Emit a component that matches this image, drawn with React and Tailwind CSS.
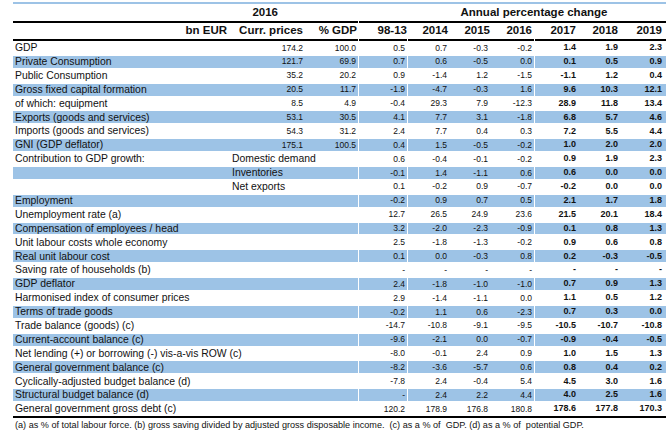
const rows = [
  ["GDP", "", "174.2", "100.0", "0.5", "0.7", "-0.3", "-0.2", "1.4", "1.9", "2.3"],
  ["Private Consumption", "", "121.7", "69.9", "0.7", "0.6", "-0.5", "0.0", "0.1", "0.5", "0.9"],
  ["Public Consumption", "", "35.2", "20.2", "0.9", "-1.4", "1.2", "-1.5", "-1.1", "1.2", "0.4"],
  ["Gross fixed capital formation", "", "20.5", "11.7", "-1.9", "-4.7", "-0.3", "1.6", "9.6", "10.3", "12.1"],
  ["of which: equipment", "", "8.5", "4.9", "-0.4", "29.3", "7.9", "-12.3", "28.9", "11.8", "13.4"],
  ["Exports (goods and services)", "", "53.1", "30.5", "4.1", "7.7", "3.1", "-1.8", "6.8", "5.7", "4.6"],
  ["Imports (goods and services)", "", "54.3", "31.2", "2.4", "7.7", "0.4", "0.3", "7.2", "5.5", "4.4"],
  ["GNI (GDP deflator)", "", "175.1", "100.5", "0.4", "1.5", "-0.5", "-0.2", "1.0", "2.0", "2.0"],
  ["Contribution to GDP growth:", "Domestic demand", "", "", "0.6", "-0.4", "-0.1", "-0.2", "0.9", "1.9", "2.3"],
  ["", "Inventories", "", "", "-0.1", "1.4", "-1.1", "0.6", "0.6", "0.0", "0.0"],
  ["", "Net exports", "", "", "0.1", "-0.2", "0.9", "-0.7", "-0.2", "0.0", "0.0"],
  ["Employment", "", "", "", "-0.2", "0.9", "0.7", "0.5", "2.1", "1.7", "1.8"],
  ["Unemployment rate (a)", "", "", "", "12.7", "26.5", "24.9", "23.6", "21.5", "20.1", "18.4"],
  ["Compensation of employees / head", "", "", "", "3.2", "-2.0", "-2.3", "-0.9", "0.1", "0.8", "1.3"],
  ["Unit labour costs whole economy", "", "", "", "2.5", "-1.8", "-1.3", "-0.2", "0.9", "0.6", "0.8"],
  ["Real unit labour cost", "", "", "", "0.1", "0.0", "-0.3", "0.8", "0.2", "-0.3", "-0.5"],
  ["Saving rate of households (b)", "", "", "", "-", "-", "-", "-", "-", "-", "-"],
  ["GDP deflator", "", "", "", "2.4", "-1.8", "-1.0", "-1.0", "0.7", "0.9", "1.3"],
  ["Harmonised index of consumer prices", "", "", "", "2.9", "-1.4", "-1.1", "0.0", "1.1", "0.5", "1.2"],
  ["Terms of trade goods", "", "", "", "-0.2", "1.1", "0.6", "-2.3", "0.7", "0.3", "0.0"],
  ["Trade balance (goods) (c)", "", "", "", "-14.7", "-10.8", "-9.1", "-9.5", "-10.5", "-10.7", "-10.8"],
  ["Current-account balance (c)", "", "", "", "-9.6", "-2.1", "0.0", "-0.7", "-0.9", "-0.4", "-0.5"],
  ["Net lending (+) or borrowing (-) vis-a-vis ROW (c)", "", "", "", "-8.0", "-0.1", "2.4", "0.9", "1.0", "1.5", "1.3"],
  ["General government balance (c)", "", "", "", "-8.2", "-3.6", "-5.7", "0.6", "0.8", "0.4", "0.2"],
  ["Cyclically-adjusted budget balance (d)", "", "", "", "-7.8", "2.4", "-0.4", "5.4", "4.5", "3.0", "1.6"],
  ["Structural budget balance (d)", "", "", "", "-", "2.4", "2.2", "4.4", "4.0", "2.5", "1.6"],
  ["General government gross debt (c)", "", "", "", "120.2", "178.9", "176.8", "180.8", "178.6", "177.8", "170.3"],
]

const Row = ({ r, blue }) => {
  const bg = blue ? "bg-[#9dc3e6]" : ""
  const num = "h-full flex items-center justify-end text-[8.5px]"
  const bold = "h-full flex items-center justify-end text-[9px] font-bold"
  return (
    <div className="flex h-[13.9px] py-[1px]">
      <div className={`w-[217px] h-full flex items-center pl-[2px] text-[10.4px] whitespace-nowrap ${bg}`}>{r[0]}</div>
      <div className={`w-[75px] h-full flex items-center pl-[2px] text-[10.4px] whitespace-nowrap ${bg}`}>
        {r[1] ? r[1] : <span className="ml-auto pr-[2px] text-[8.5px]">{r[2]}</span>}
      </div>
      <div className={`w-[53px] pr-[2px] ${num} ${bg}`}>{r[3]}</div>
      <div className="w-[1px]" />
      <div className={`w-[48px] pr-[2px] ${num} ${bg}`}>{r[4]}</div>
      <div className="w-[1px]" />
      <div className={`w-[42px] pr-[3px] ${num} ${bg}`}>{r[5]}</div>
      <div className={`w-[41px] pr-[3px] ${num} ${bg}`}>{r[6]}</div>
      <div className={`w-[43px] pr-[2px] ${num} ${bg}`}>{r[7]}</div>
      <div className="w-[1px]" />
      <div className={`w-[44px] pr-[3px] ${bold} ${bg}`}>{r[8]}</div>
      <div className={`w-[42px] pr-[3px] ${bold} ${bg}`}>{r[9]}</div>
      <div className={`w-[45px] pr-[4px] ${bold} ${bg}`}>{r[10]}</div>
    </div>
  )
}

export default function App() {
  return (
    <div className="w-[671px] h-[440px] bg-white pt-[2px] pl-[13px] overflow-hidden text-[#111] font-['Liberation_Sans',Arial,sans-serif]">
      <div className="w-[653px]">
        <div className="h-[2px] bg-[#9dc3e6]" />

        <div className="flex h-[17px] items-center text-[11.5px] font-bold">
          <div className="w-[345px] text-right pr-[80px]">2016</div>
          <div className="w-[1px]" />
          <div className="w-[49px]" />
          <div className="flex-1 text-center pr-[6px]">Annual percentage change</div>
        </div>

        <div className="flex h-[2px]">
          <div className="w-[345px] bg-black" />
          <div className="w-[1px]" />
          <div className="flex-1 bg-black" />
        </div>

        <div className="flex h-[16px] items-center text-[11.5px] font-bold whitespace-nowrap">
          <div className="w-[217px] text-right pr-[3px]">bn EUR</div>
          <div className="w-[75px] text-right pr-[2px]">Curr. prices</div>
          <div className="w-[53px] text-right pr-[1px]">% GDP</div>
          <div className="w-[1px]" />
          <div className="w-[48px] text-right">98-13</div>
          <div className="w-[1px]" />
          <div className="w-[42px] text-right pr-[2px]">2014</div>
          <div className="w-[41px] text-right pr-[1px]">2015</div>
          <div className="w-[43px] text-right pr-[2px]">2016</div>
          <div className="w-[1px]" />
          <div className="w-[44px] text-right pr-[3px]">2017</div>
          <div className="w-[42px] text-right pr-[3px]">2018</div>
          <div className="w-[45px] text-right pr-[4px]">2019</div>
        </div>

        <div className="flex h-[2px]">
          <div className="w-[345px] bg-black" />
          <div className="w-[1px]" />
          <div className="w-[48px] bg-black" />
          <div className="w-[1px]" />
          <div className="w-[126px] bg-black" />
          <div className="w-[1px]" />
          <div className="flex-1 bg-black" />
        </div>

        {rows.map((r, i) => (
          <Row key={i} r={r} blue={i % 2 === 1} />
        ))}

        <div className="h-[2px] bg-black" />

        <div className="h-[16px] flex items-center pl-[2px] text-[9.1px] whitespace-pre">
          (a) as % of total labour force. (b) gross saving divided by adjusted gross disposable income.  (c) as a % of  GDP. (d) as a % of  potential GDP.
        </div>
      </div>
    </div>
  )
}
